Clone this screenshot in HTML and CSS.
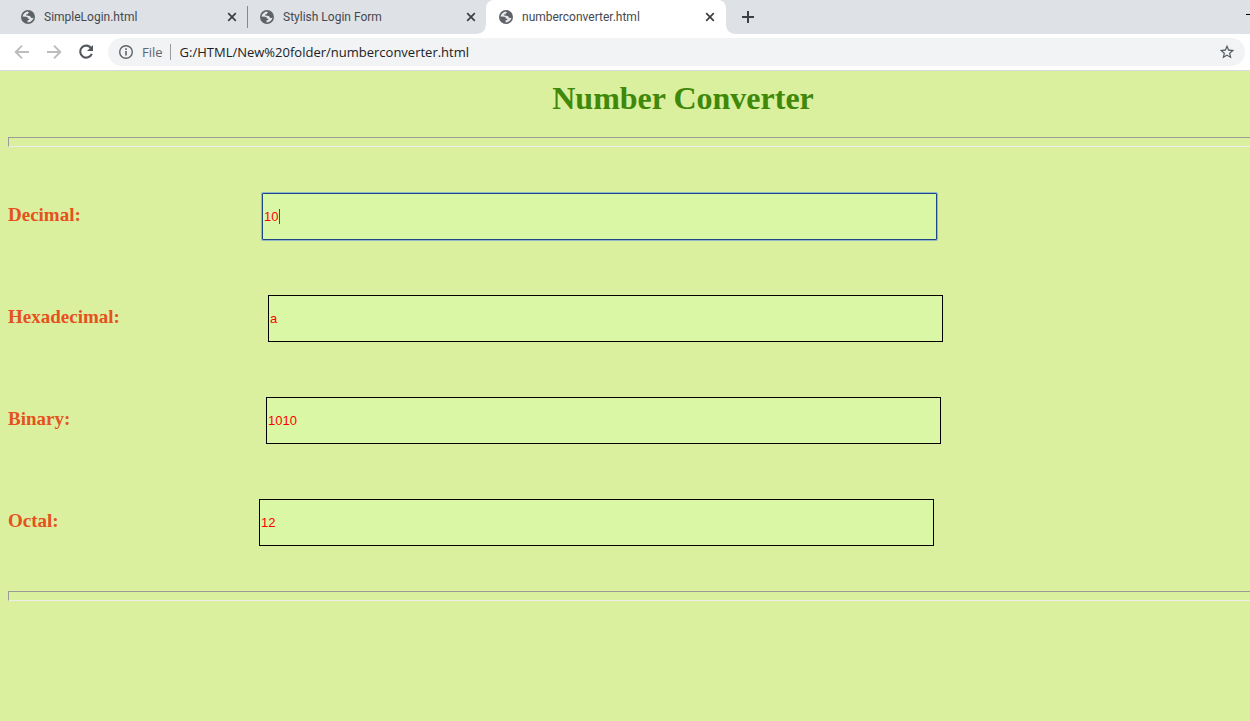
FILE: index.html
```html
<!DOCTYPE html>
<html lang="en">
<head>
<meta charset="utf-8">
<title>numberconverter.html</title>
<link rel="stylesheet" href="styles.css">
</head>
<body>
<svg class="defs" aria-hidden="true">
  <symbol id="globe" viewBox="0 0 14 14">
    <circle cx="7" cy="7" r="7" fill="#5f6368"/>
    <path d="M6.8 1.5C4.9 1.7 2.1 3.6 1.5 6.5L5 6.7C6.5 6.8 6.8 7.5 6.8 8.6L8.3 8.7V9.9L6.6 10.3V12.5C8.8 12.6 12.1 10.7 12.5 7.6C11.7 8.4 10.3 8.2 9.8 7.4C9.4 6.2 8.9 6 7.3 5.8L5.2 5.5V4.2H6.8L7 2.9L8.2 2.7Z" fill="#e6e8eb"/>
  </symbol>
  <symbol id="close" viewBox="0 0 10 10">
    <path d="M1.2 1.2L8.8 8.8M8.8 1.2L1.2 8.8" stroke="#3c4043" stroke-width="1.7" fill="none"/>
  </symbol>
</svg>
<header class="browser">
  <div class="tabs">
    <div class="tab">
      <svg class="favicon"><use href="#globe"/></svg>
      <span class="tab-title">SimpleLogin.html</span>
      <button class="tab-close" aria-label="Close SimpleLogin.html"><svg><use href="#close"/></svg></button>
    </div>
    <div class="tab divided">
      <svg class="favicon"><use href="#globe"/></svg>
      <span class="tab-title">Stylish Login Form</span>
      <button class="tab-close" aria-label="Close Stylish Login Form"><svg><use href="#close"/></svg></button>
    </div>
    <div class="tab active">
      <svg class="favicon"><use href="#globe"/></svg>
      <span class="tab-title">numberconverter.html</span>
      <button class="tab-close" aria-label="Close numberconverter.html"><svg><use href="#close"/></svg></button>
    </div>
    <button class="new-tab" aria-label="New tab"><svg viewBox="0 0 12 12"><path d="M6 0V12M0 6H12" stroke="#3c4043" stroke-width="2"/></svg></button>
    <button class="minimize" aria-label="Minimize"></button>
  </div>
  <div class="toolbar">
    <button class="nav" aria-label="Back"><svg viewBox="0 0 16 16"><path d="M15 8H2.4M8 1.6L1.7 8L8 14.4" fill="none" stroke="#babcbe" stroke-width="1.9"/></svg></button>
    <button class="nav" aria-label="Forward"><svg viewBox="0 0 16 16"><path d="M1 8H13.6M8 1.6L14.3 8L8 14.4" fill="none" stroke="#babcbe" stroke-width="1.9"/></svg></button>
    <button class="nav" aria-label="Reload"><svg viewBox="0 0 16 16"><path d="M13.3 4.4A6 6 0 1 0 13.8 9.8" fill="none" stroke="#54585d" stroke-width="2.1"/><path d="M15 1V7H9Z" fill="#54585d"/></svg></button>
    <div class="omnibox">
      <svg class="info" viewBox="0 0 14 14"><circle cx="7" cy="7" r="6.3" fill="none" stroke="#5f6368" stroke-width="1.4"/><path d="M7 6V10.6M7 3.3V4.9" stroke="#5f6368" stroke-width="1.6"/></svg>
      <span class="scheme">File</span>
      <input class="url" aria-label="Address" value="G:/HTML/New%20folder/numberconverter.html">
      <button class="star" aria-label="Bookmark this page"><svg viewBox="1 1 22 22"><path d="M22 9.24l-7.19-.62L12 2 9.19 8.63 2 9.24l5.46 4.73L5.82 21 12 17.27 18.18 21l-1.63-7.03L22 9.24zM12 15.4l-3.76 2.27 1-4.28-3.32-2.88 4.38-.38L12 6.1l1.71 4.04 4.38.38-3.32 2.88 1 4.28L12 15.4z" fill="#54585d"/></svg></button>
    </div>
  </div>
</header>
<main class="page">
  <h1>Number Converter</h1>
  <hr>
  <form class="converter">
    <div class="row decimal">
      <label for="dec">Decimal:</label>
      <div class="field"><input id="dec" class="focused" value="10"><span class="caret"></span></div>
    </div>
    <div class="row hexadecimal">
      <label for="hex">Hexadecimal:</label>
      <div class="field"><input id="hex" value="a"></div>
    </div>
    <div class="row binary">
      <label for="bin">Binary:</label>
      <div class="field"><input id="bin" value="1010"></div>
    </div>
    <div class="row octal">
      <label for="oct">Octal:</label>
      <div class="field"><input id="oct" value="12"></div>
    </div>
  </form>
  <hr>
</main>
</body>
</html>
```
FILE: styles.css
```css
* { box-sizing: border-box; }
html { min-height: 100%; background: #daf09e; }
body { margin: 0; overflow: hidden; }
button { border: 0; padding: 0; background: none; display: flex; flex: none; align-items: center; justify-content: center; }
.defs { display: none; }

.browser { font-family: "Open Sans", "Noto Sans", sans-serif; border-bottom: 1px solid #d9dbdd; }
.tabs { display: flex; height: 34px; padding-left: 8px; background: #dee1e6; }
.tab { display: flex; align-items: center; width: 239px; padding: 0 10px 0 13px; color: #45494d; font-family: Roboto, sans-serif; font-size: 12px; position: relative; }
.tab.divided { padding-left: 12px; border-left: 1px solid; border-image: linear-gradient(transparent 7px, #85888c 7px, #85888c 27px, transparent 27px) 1; }
.tab.active { width: 240px; padding-right: 11px; background: #fff; border-radius: 8px 8px 0 0; }
.tab.active::before, .tab.active::after { content: ""; position: absolute; bottom: 0; width: 8px; height: 8px; }
.tab.active::before { left: -8px; background: radial-gradient(circle at 0 0, transparent 7px, #fff 8px); }
.tab.active::after { right: -8px; background: radial-gradient(circle at 100% 0, transparent 7px, #fff 8px); }
.favicon { width: 14px; height: 14px; margin-right: 9px; flex: none; }
.tab-title { flex: 1; white-space: nowrap; }
.tab-close svg { width: 10px; height: 10px; display: block; }
.new-tab { width: 44px; }
.new-tab svg { width: 12px; height: 12px; }
.minimize { width: 4px; height: 1px; margin: 14px 0 0 auto; background: #000; }

.toolbar { display: flex; align-items: center; height: 36px; padding: 0 5px 0 6px; background: #fff; }
.nav { width: 32px; height: 28px; }
.nav svg { width: 16px; height: 16px; }
.omnibox { display: flex; flex: 1; align-items: center; height: 28px; margin-left: 6px; padding: 0 10px 0 11px; border-radius: 14px; background: #f1f3f4; font-size: 13px; }
.info { width: 14px; height: 14px; margin-right: 9px; }
.scheme { color: #5f6368; padding-right: 7px; border-right: 1px solid #9a9da1; line-height: 16px; }
.url { flex: 1; min-width: 0; border: 0; padding: 0 0 0 9px; background: none; font: inherit; color: #202124; outline: 0; }
.star svg { width: 16px; height: 16px; }

.page { min-width: 1366px; padding: 8px; font-family: "Liberation Serif", "Times New Roman", serif; }
h1 { margin: 0 0 20px; color: #40880a; font-size: 32px; line-height: 38px; text-align: center; }
hr { height: 10px; margin: 0; border: 1px solid; border-color: #9a9a9a #eee #eee #9a9a9a; }
.converter { display: flex; flex-direction: column; gap: 55px; padding: 46px 0 45px; }
.row { display: flex; align-items: center; }
.row label { flex: none; padding-bottom: 4px; color: #e65120; font-size: 19px; font-weight: bold; line-height: 22px; }
.decimal label { width: 254px; }
.hexadecimal label { width: 260px; }
.binary label { width: 258px; }
.octal label { width: 251px; }
.field { position: relative; width: 50%; }
.field input { display: block; width: 100%; height: 47px; padding: 0 1px; border: 1px solid #000; background: #daf7a6; color: #f00; font: 13px "Liberation Sans", Arial, sans-serif; outline: 0; }
.field .focused { border-color: #1f4788; box-shadow: 0 0 0 1px #8fb9c4; border-radius: 1px; }
.caret { position: absolute; left: 17px; top: 16px; width: 1px; height: 15px; background: #f00; }
```
